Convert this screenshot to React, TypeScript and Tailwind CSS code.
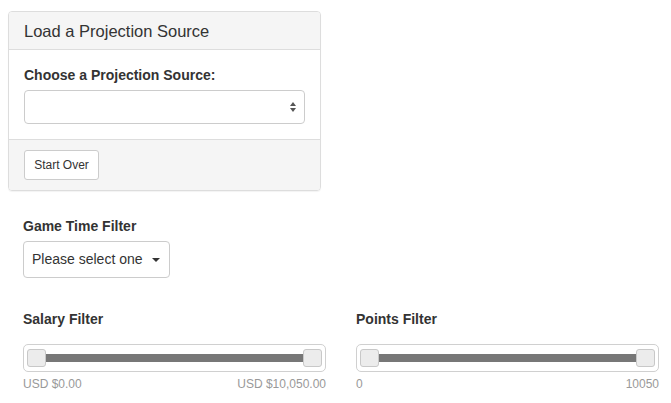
import React from "react";

function RangeSlider({ left, right }: { left: string; right: string }) {
  return (
    <div className="flex flex-col">
      <div className="h-[28px] rounded-[5px] border border-[#d0d0d0] bg-white flex items-center px-[3px]">
        <div className="h-[18px] w-[19px] rounded-[3px] border border-[#c8c8c8] bg-[#ececec] shrink-0" />
        <div className="h-[8px] flex-1 bg-[#777]" />
        <div className="h-[18px] w-[19px] rounded-[3px] border border-[#c8c8c8] bg-[#ececec] shrink-0" />
      </div>
      <div className="flex justify-between text-[12px] leading-[14px] text-[#999] mt-[5px]">
        <span>{left}</span>
        <span>{right}</span>
      </div>
    </div>
  );
}

export default function App() {
  return (
    <div
      className="w-[671px] h-[403px] bg-white text-[#333] overflow-hidden"
      style={{ fontFamily: '"Liberation Sans", Arial, sans-serif' }}
    >
      <div className="pt-[11px] pl-[8px]">
        <div className="w-[313px] rounded-[4px] border border-[#ddd] shadow-[0_1px_1px_rgba(0,0,0,0.05)] overflow-hidden">
          <div className="h-[38px] bg-[#f5f5f5] border-b border-[#ddd] px-[15px] flex items-center">
            <span className="text-[16.5px] leading-[18px] pt-[1px]">Load a Projection Source</span>
          </div>
          <div className="bg-white px-[15px] pt-[15px] pb-[15px]">
            <div className="text-[14px] leading-[20px] font-bold mb-[5px]">Choose a Projection Source:</div>
            <div className="h-[34px] rounded-[4px] border border-[#ccc] bg-white flex items-center justify-end pr-[7px]">
              <svg width="8" height="12" viewBox="0 0 8 12">
                <path d="M4 1 L7 5 L1 5 Z" fill="#555" />
                <path d="M4 11 L7 7 L1 7 Z" fill="#555" />
              </svg>
            </div>
          </div>
          <div className="h-[51px] bg-[#f5f5f5] border-t border-[#ddd] px-[15px] flex items-center">
            <div className="h-[30px] w-[75px] justify-center rounded-[3px] border border-[#ccc] bg-white flex items-center text-[12px]">
              Start Over
            </div>
          </div>
        </div>
      </div>

      <div className="pl-[23px] mt-[25px]">
        <div className="text-[14px] leading-[20px] font-bold">Game Time Filter</div>
        <div className="mt-[5px] w-[147px] h-[37px] rounded-[4px] border border-[#ccc] bg-white flex items-center justify-between pl-[8px] pr-[9px] text-[14px]">
          <span>Please select one</span>
          <svg width="8" height="4" viewBox="0 0 8 4">
            <path d="M0 0 L8 0 L4 4 Z" fill="#333" />
          </svg>
        </div>
      </div>

      <div className="pl-[8px] mt-[31px] flex">
        <div className="w-[333px] shrink-0 px-[15px]">
          <div className="text-[14px] leading-[20px] font-bold mb-[15px]">Salary Filter</div>
          <RangeSlider left="USD $0.00" right="USD $10,050.00" />
        </div>
        <div className="w-[333px] shrink-0 px-[15px]">
          <div className="text-[14px] leading-[20px] font-bold mb-[15px]">Points Filter</div>
          <RangeSlider left="0" right="10050" />
        </div>
      </div>
    </div>
  );
}
